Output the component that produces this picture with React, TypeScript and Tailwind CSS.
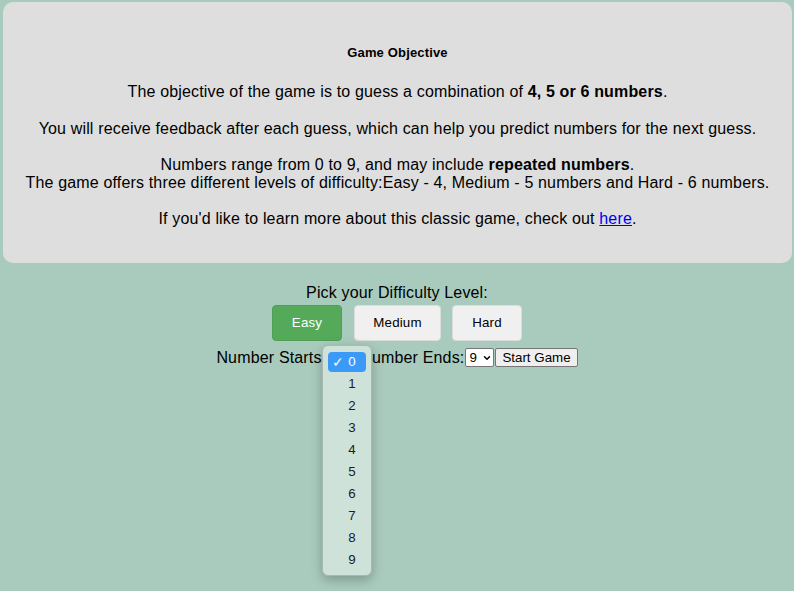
import { ChevronDown } from "lucide-react";

const font = { fontFamily: '"Liberation Sans", Arial, sans-serif' };

function Chevron() {
  return <ChevronDown className="pointer-events-none absolute right-[2px] top-[5px] h-[10px] w-[10px]" strokeWidth={3.5} />;
}

function NumberSelect({ value }: { value: string }) {
  return (
    <span className="relative inline-block align-middle">
      <select
        defaultValue={value}
        className="h-[19px] w-[29px] appearance-none rounded-[2px] border border-[#767676] bg-white pl-[3px] text-[13.33px] leading-[17px] tracking-normal text-black"
      >
        {Array.from({ length: 10 }, (_, i) => (
          <option key={i}>{i}</option>
        ))}
      </select>
      <Chevron />
    </span>
  );
}

function OpenPicker() {
  return (
    <div className="absolute left-[-5px] top-[-3px] z-10 h-[231px] w-[50px] rounded-[6px] border border-[#a9b8b1] bg-[#cfe2d9] px-[5px] pt-[6px] tracking-normal shadow-[0_4px_12px_rgba(0,0,0,0.25)]">
      <div className="flex h-[20px] items-center rounded-[4px] bg-[#3b99f7] pl-[4px] text-[13.33px] text-white">
        <span className="w-[16px] text-[14px] leading-[20px]">✓</span>
        <span>0</span>
      </div>
      <div className="mt-[1px]">
        {Array.from({ length: 9 }, (_, i) => (
          <div key={i} className="flex h-[22px] items-center pl-[20px] text-[13.33px] text-[#1c1c1c]">
            {i + 1}
          </div>
        ))}
      </div>
    </div>
  );
}

export default function App() {
  return (
    <div className="min-h-screen bg-[#a9cbbd] pt-[2px] tracking-[0.16px] text-black" style={font}>
      <section className="ml-[3px] mr-[2px] rounded-[10px] bg-[#dedede] px-[20px] pb-[35px] pt-[43px] text-center text-[16px] leading-[18px]">
        <h5 className="text-[13px] font-bold leading-[15px]">Game Objective</h5>
        <p className="mt-[23px]">
          The objective of the game is to guess a combination of <b>4, 5 or 6 numbers</b>.
        </p>
        <p className="mt-[19px]">
          You will receive feedback after each guess, which can help you predict numbers for the next guess.
        </p>
        <p className="mt-[18px]">
          Numbers range from 0 to 9, and may include <b>repeated numbers</b>.
          <br />
          The game offers three different levels of difficulty:Easy - 4, Medium - 5 numbers and Hard - 6 numbers.
        </p>
        <p className="mt-[18px]">
          If you'd like to learn more about this classic game, check out{" "}
          <a href="#" className="text-[#0000ee] underline">
            here
          </a>
          .
        </p>
      </section>

      <div className="mt-[21px] flex flex-col items-center text-[16px] leading-[18px]">
        <p>Pick your Difficulty Level:</p>
        <div className="mt-[3px] flex">
          <button className="h-[36px] w-[70px] rounded-[4px] border border-[#4f9f55] bg-[#55aa5a] text-[13.33px] text-white">
            Easy
          </button>
          <button className="ml-[12px] h-[36px] w-[87px] rounded-[4px] border border-[#dcdcdc] bg-[#f0f0f0] text-[13.33px] text-black">
            Medium
          </button>
          <button className="ml-[11px] h-[36px] w-[70px] rounded-[4px] border border-[#dcdcdc] bg-[#f0f0f0] text-[13.33px] text-black">
            Hard
          </button>
        </div>
        <div className="mt-[7px] flex items-center">
          <span>Number Starts:</span>
          <span className="relative ml-[1px] inline-block">
            <NumberSelect value="0" />
            <OpenPicker />
          </span>
          <span className="ml-[4px]">Number Ends:</span>
          <span className="ml-[1px]">
            <NumberSelect value="9" />
          </span>
          <button className="ml-[1px] h-[19px] rounded-[2px] border border-[#767676] bg-[#efefef] px-[6px] text-[13.33px] leading-[17px] tracking-normal">
            Start Game
          </button>
        </div>
      </div>
    </div>
  );
}
